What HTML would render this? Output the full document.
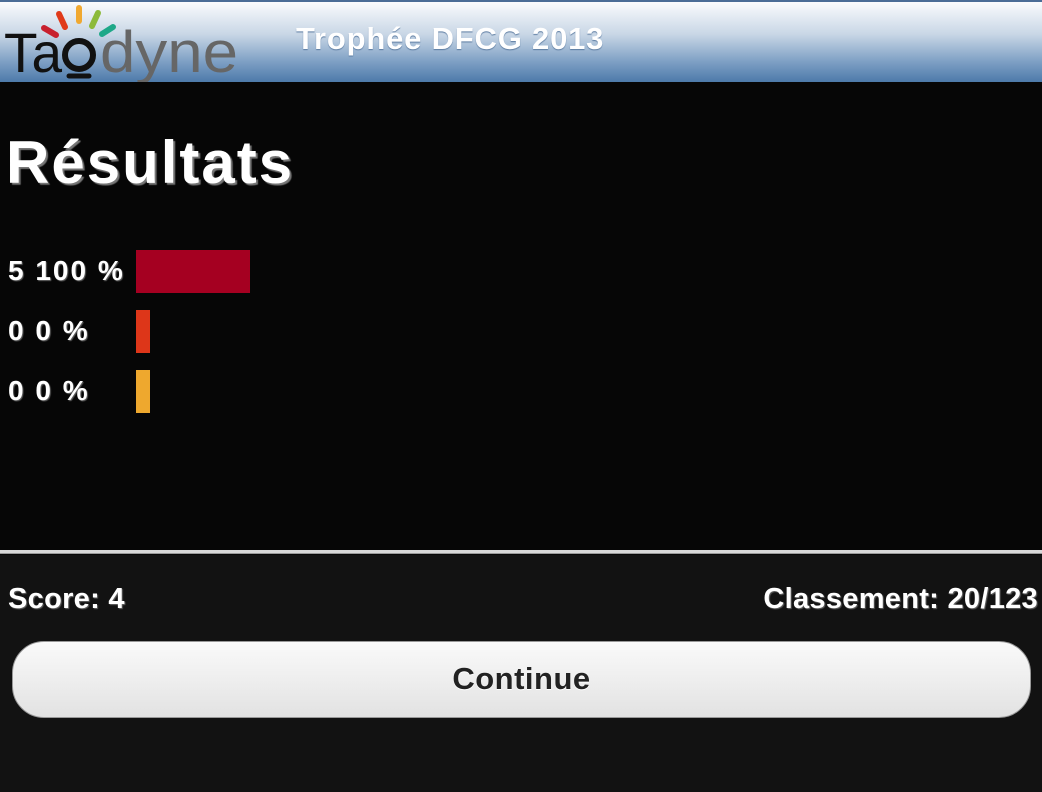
<!DOCTYPE html>
<html><head><meta charset="utf-8"><style>
*{margin:0;padding:0;box-sizing:border-box}
body{width:1042px;height:792px;overflow:hidden;background:#080808;font-family:"Liberation Sans",sans-serif;position:relative;color:#fff}
.hdr{position:absolute;left:0;top:0;width:1042px;height:82px;background:linear-gradient(#fafbfd 0%,#c9d7e6 40%,#7d9fc4 75%,#4d7aaa 100%);border-top:2px solid #4a6c96}
.title{position:absolute;left:296px;top:19px;font-size:31px;font-weight:bold;color:#fff;text-shadow:0 1px 1px #5a7aa0;letter-spacing:0.8px}
.logo{position:absolute;left:0;top:2px}
.main{position:absolute;left:0;top:82px;width:1042px;height:470px;background:#060606}
h1{position:absolute;left:6px;top:128px;font-size:60px;font-weight:bold;text-shadow:2px 2px 1px #777;letter-spacing:2px}
.lbl{position:absolute;left:8px;font-size:28px;font-weight:bold;text-shadow:1px 1px 1px #666;letter-spacing:2px}
.bar{position:absolute;left:136px;height:43px}
.line{position:absolute;left:0;top:550px;width:1042px;height:4px;background:#d8d8d8;border-bottom:1px solid #999}
.foot{position:absolute;left:0;top:555px;width:1042px;height:237px;background:#121212}
.sc{position:absolute;top:583px;font-size:29px;font-weight:bold;text-shadow:1px 1px 1px #666;letter-spacing:0.3px}
.btn{position:absolute;left:12px;top:641px;width:1019px;height:77px;border-radius:32px;background:linear-gradient(#fafafa,#e2e2e2);border:1px solid #999;text-align:center;line-height:74px;font-size:31px;font-weight:bold;color:#222;text-shadow:0 1px 0 #fff;letter-spacing:0.5px}
</style></head><body>
<div class="hdr">
<svg class="logo" width="245" height="80" viewBox="0 0 245 80">
<g stroke-linecap="round" stroke-width="6" fill="none">
<line x1="44" y1="24" x2="56" y2="31" stroke="#c8202e"/>
<line x1="59" y1="10" x2="65" y2="23" stroke="#e03a1a"/>
<line x1="79" y1="4" x2="79" y2="17" stroke="#f0a830"/>
<line x1="98" y1="9" x2="92" y2="22" stroke="#8cba3a"/>
<line x1="113" y1="23" x2="102" y2="30" stroke="#1ea888"/>
</g>
<text x="4" y="68" font-family="Liberation Sans,sans-serif" font-size="56" fill="#111" textLength="58" lengthAdjust="spacingAndGlyphs">Ta</text>
<circle cx="79" cy="51" r="14" stroke="#111" stroke-width="6" fill="none"/>
<line x1="69" y1="72" x2="89" y2="72" stroke="#111" stroke-width="5" stroke-linecap="round"/>
<text x="100" y="68" font-family="Liberation Sans,sans-serif" font-size="58" fill="#666" textLength="138" lengthAdjust="spacingAndGlyphs">dyne</text>
</svg>
<div class="title">Trophée DFCG 2013</div>
</div>
<div class="main"></div>
<h1>Résultats</h1>
<div class="lbl" style="top:255px">5 100 %</div>
<div class="bar" style="top:250px;width:114px;background:#a50021"></div>
<div class="lbl" style="top:315px">0 0 %</div>
<div class="bar" style="top:310px;width:14px;background:#dd3619"></div>
<div class="lbl" style="top:375px">0 0 %</div>
<div class="bar" style="top:370px;width:14px;background:#eea82e"></div>
<div class="line"></div>
<div class="foot"></div>
<div class="sc" style="left:8px">Score: 4</div>
<div class="sc" style="right:4px">Classement: 20/123</div>
<div class="btn">Continue</div>
</body></html>
